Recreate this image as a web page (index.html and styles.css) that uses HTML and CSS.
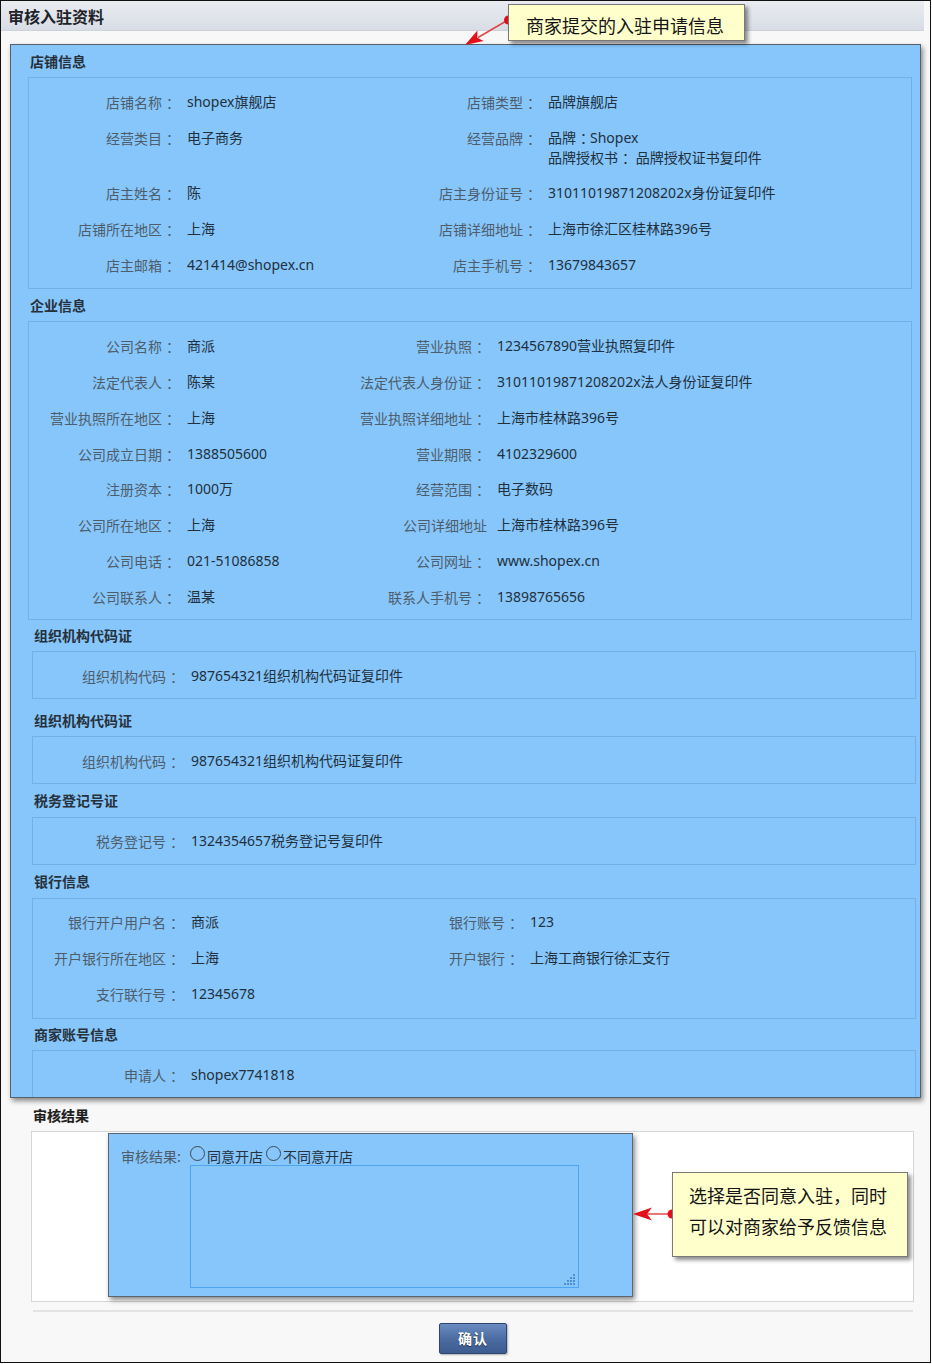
FILE: index.html
```html
<!DOCTYPE html>
<html lang="zh-CN">
<head>
<meta charset="utf-8">
<title>审核入驻资料</title>
<link rel="stylesheet" href="styles.css">
</head>
<body>
<div class="frame">
  <div class="topbar">审核入驻资料</div>
  <div class="content">
    <div class="hl-main">
      <section class="sec">
        <h2 class="sec-title">店铺信息</h2>
        <div class="sec-box kv kv-shop">
          <div class="lbl">店铺名称<span class="c">：</span></div><div class="val">shopex旗舰店</div>
          <div class="lbl">店铺类型<span class="c">：</span></div><div class="val">品牌旗舰店</div>
          <div class="lbl">经营类目<span class="c">：</span></div><div class="val">电子商务</div>
          <div class="lbl">经营品牌<span class="c">：</span></div><div class="val multi">品牌<span class="c">：</span>Shopex<br>品牌授权书<span class="c">：</span> 品牌授权证书复印件</div>
          <div class="lbl">店主姓名<span class="c">：</span></div><div class="val">陈</div>
          <div class="lbl">店主身份证号<span class="c">：</span></div><div class="val">31011019871208202x身份证复印件</div>
          <div class="lbl">店铺所在地区<span class="c">：</span></div><div class="val">上海</div>
          <div class="lbl">店铺详细地址<span class="c">：</span></div><div class="val">上海市徐汇区桂林路396号</div>
          <div class="lbl">店主邮箱<span class="c">：</span></div><div class="val">421414@shopex.cn</div>
          <div class="lbl">店主手机号<span class="c">：</span></div><div class="val">13679843657</div>
        </div>
      </section>

      <section class="sec">
        <h2 class="sec-title t-co">企业信息</h2>
        <div class="sec-box kv kv-co">
          <div class="lbl">公司名称<span class="c">：</span></div><div class="val">商派</div>
          <div class="lbl">营业执照<span class="c">：</span></div><div class="val">1234567890营业执照复印件</div>
          <div class="lbl">法定代表人<span class="c">：</span></div><div class="val">陈某</div>
          <div class="lbl">法定代表人身份证<span class="c">：</span></div><div class="val">31011019871208202x法人身份证复印件</div>
          <div class="lbl">营业执照所在地区<span class="c">：</span></div><div class="val">上海</div>
          <div class="lbl">营业执照详细地址<span class="c">：</span></div><div class="val">上海市桂林路396号</div>
          <div class="lbl">公司成立日期<span class="c">：</span></div><div class="val">1388505600</div>
          <div class="lbl">营业期限<span class="c">：</span></div><div class="val">4102329600</div>
          <div class="lbl">注册资本<span class="c">：</span></div><div class="val">1000万</div>
          <div class="lbl">经营范围<span class="c">：</span></div><div class="val">电子数码</div>
          <div class="lbl">公司所在地区<span class="c">：</span></div><div class="val">上海</div>
          <div class="lbl lbl-nocolon">公司详细地址</div><div class="val">上海市桂林路396号</div>
          <div class="lbl">公司电话<span class="c">：</span></div><div class="val">021-51086858</div>
          <div class="lbl">公司网址<span class="c">：</span></div><div class="val">www.shopex.cn</div>
          <div class="lbl">公司联系人<span class="c">：</span></div><div class="val">温某</div>
          <div class="lbl">联系人手机号<span class="c">：</span></div><div class="val">13898765656</div>
        </div>
      </section>

      <section class="sec shift">
        <h2 class="sec-title">组织机构代码证</h2>
        <div class="sec-box kv kv-one">
          <div class="lbl">组织机构代码<span class="c">：</span></div><div class="val">987654321组织机构代码证复印件</div>
        </div>
      </section>

      <section class="sec shift">
        <h2 class="sec-title t-gap">组织机构代码证</h2>
        <div class="sec-box kv kv-one">
          <div class="lbl">组织机构代码<span class="c">：</span></div><div class="val">987654321组织机构代码证复印件</div>
        </div>
      </section>

      <section class="sec shift">
        <h2 class="sec-title t-mid">税务登记号证</h2>
        <div class="sec-box kv kv-one kv-up">
          <div class="lbl">税务登记号<span class="c">：</span></div><div class="val">1324354657税务登记号复印件</div>
        </div>
      </section>

      <section class="sec shift">
        <h2 class="sec-title t-mid">银行信息</h2>
        <div class="sec-box kv kv-bank kv-up">
          <div class="lbl">银行开户用户名<span class="c">：</span></div><div class="val">商派</div>
          <div class="lbl">银行账号<span class="c">：</span></div><div class="val">123</div>
          <div class="lbl">开户银行所在地区<span class="c">：</span></div><div class="val">上海</div>
          <div class="lbl">开户银行<span class="c">：</span></div><div class="val">上海工商银行徐汇支行</div>
          <div class="lbl">支行联行号<span class="c">：</span></div><div class="val">12345678</div>
        </div>
      </section>

      <section class="sec shift">
        <h2 class="sec-title">商家账号信息</h2>
        <div class="sec-box kv kv-one last">
          <div class="lbl">申请人<span class="c">：</span></div><div class="val">shopex7741818</div>
        </div>
      </section>
    </div>

    <section class="result">
      <h2 class="sec-title result-title">审核结果</h2>
      <div class="result-box">
        <div class="hl-result">
          <div class="res-label">审核结果:</div>
          <div class="res-body">
            <div class="radios">
              <label class="radio"><input type="radio" name="res"><span>同意开店</span></label>
              <label class="radio"><input type="radio" name="res"><span>不同意开店</span></label>
            </div>
            <div class="ta-wrap">
              <textarea class="ta"></textarea>
              <svg class="grip" width="12" height="11" viewBox="0 0 12 11">
                <rect x="9" y="0" width="2" height="2"/>
                <rect x="6" y="3" width="2" height="2"/><rect x="9" y="3" width="2" height="2"/>
                <rect x="3" y="6" width="2" height="2"/><rect x="6" y="6" width="2" height="2"/><rect x="9" y="6" width="2" height="2"/>
                <rect x="0" y="9" width="2" height="2"/><rect x="3" y="9" width="2" height="2"/><rect x="6" y="9" width="2" height="2"/><rect x="9" y="9" width="2" height="2"/>
              </svg>
            </div>
          </div>
        </div>
      </div>
      <div class="divider"></div>
      <div class="actions"><button class="btn" type="button">确认</button></div>
    </section>
  </div>

  <svg class="arrows" width="932" height="1364" viewBox="0 0 932 1364">
    <line x1="508" y1="20" x2="478" y2="37.5" stroke="#e04848" stroke-width="1.5"/>
    <polygon points="465,45 477.4,30.6 477.3,37.8 483.6,41" fill="#e3101b"/>
    <circle cx="508.5" cy="20" r="4.5" fill="#e3101b"/>
    <line x1="647" y1="1214" x2="672" y2="1214" stroke="#e04848" stroke-width="1.5"/>
    <polygon points="633,1214 652,1207.5 647,1214 652,1220.5" fill="#e3101b"/>
    <circle cx="672" cy="1214" r="4.5" fill="#e3101b"/>
  </svg>

  <div class="callout callout-top">商家提交的入驻申请信息</div>
  <div class="callout callout-side">选择是否同意入驻，同时<br>可以对商家给予反馈信息</div>
</div>
</body>
</html>
```

FILE: styles.css
```css
* {
  box-sizing: border-box;
  margin: 0;
  padding: 0;
}

html, body {
  background: #ffffff;
}

body {
  margin: 0;
  font-family: "Noto Sans", "Noto Sans CJK SC", sans-serif;
  color: #222;
}

/* full-width colon, ink centred in a 14px cell */
.c {
  display: inline-block;
  padding-left: 4px;
  letter-spacing: -4px;
  line-height: 0;
  font-family: "Noto Sans CJK SC", sans-serif;
}

.frame {
  position: relative;
  width: 931px;
  height: 1363px;
  border: 1px solid #111;
  background: #f8f8f8;
  overflow: hidden;
}

.topbar {
  width: 923px;
  height: 30px;
  padding: 2px 0 0 7px;
  line-height: 27px;
  font-family: "Noto Sans CJK SC", sans-serif;
  font-size: 16px;
  font-weight: bold;
  color: #1e2329;
  background: linear-gradient(#e9ecf1, #d8dde5);
  border-bottom: 1px solid #cdd2da;
}

.content {
  padding-top: 13px;
}

/* big blue highlighted region */
.hl-main {
  margin: 0 9px 0 9px;
  padding: 1px 8px 0 17px;
  background: #86c6fa;
  border: 1px solid #56616c;
  box-shadow: 2px 3px 5px rgba(0, 0, 0, 0.45);
}

.sec-title {
  height: 31px;
  padding: 7px 0 0 2px;
  line-height: 16px;
  font-family: "Noto Sans CJK SC", sans-serif;
  font-size: 14px;
  font-weight: bold;
  color: #26313c;
}

.t-co {
  height: 32px;
  padding-top: 8px;
}

.t-gap {
  height: 37px;
  padding-top: 13px;
}

.t-mid {
  height: 33px;
  padding-top: 8px;
}

.sec.shift {
  margin-left: 4px;
  margin-right: -4px;
}

.sec-box {
  border: 1px solid #70b1e8;
  padding: 7px 0 3px 0;
}

.sec-box.last {
  border-bottom: none;
}

.kv {
  display: grid;
  align-items: start;
  font-size: 14px;
}

.kv-shop {
  grid-template-columns: 158px 200px 161px 1fr;
  grid-template-rows: 36px 55px 36px 36px 36px;
  padding-bottom: 4px;
}

.kv-co {
  grid-template-columns: 158px 150px 160px 1fr;
  grid-auto-rows: 35.85px;
}

.kv-bank {
  grid-template-columns: 158px 180px 159px 1fr;
  grid-auto-rows: 36px;
  padding-bottom: 4px;
}

.kv-one {
  grid-template-columns: 158px 1fr;
  grid-auto-rows: 36px;
}

.lbl,
.val {
  padding-top: 7px;
  line-height: 20px;
  white-space: nowrap;
}

.kv-up .lbl,
.kv-up .val {
  padding-top: 6px;
}

.lbl {
  text-align: right;
  font-family: "Noto Sans CJK SC", sans-serif;
  color: #4e5d6c;
}

.kv .lbl {
  padding-right: 11px;
}

.kv .lbl.lbl-nocolon {
  padding-right: 10px;
}

.val {
  color: #22303d;
}

/* result section */
.result-title {
  margin-left: 30px;
  height: 33px;
  padding-top: 9px;
  color: #1f1f1f;
  text-shadow: 0 0 1px rgba(0, 0, 0, 0.25);
}

.result-box {
  margin-left: 30px;
  width: 883px;
  background: #ffffff;
  border: 1px solid #d6d6d6;
  padding: 1px 0 4px 76px;
}

.hl-result {
  width: 525px;
  height: 164px;
  display: grid;
  grid-template-columns: 81px 1fr;
  align-content: start;
  background: #86c6fa;
  border: 1px solid #5b6671;
  box-shadow: 2px 3px 5px rgba(0, 0, 0, 0.45);
  font-family: "Noto Sans CJK SC", sans-serif;
  font-size: 14px;
}

.res-label {
  padding: 12px 0 0 12px;
  line-height: 20px;
  color: #4e5d6c;
  white-space: nowrap;
}

.radios {
  display: flex;
  padding-top: 12px;
  height: 31px;
  line-height: 20px;
  color: #26323e;
}

.radio {
  display: flex;
  align-items: center;
  height: 20px;
  margin-right: 3px;
}

.radio input {
  appearance: none;
  -webkit-appearance: none;
  width: 15px;
  height: 15px;
  margin: -4px 2px 0 0;
  border: 1px solid #3e4852;
  border-radius: 50%;
  background: transparent;
}

.ta-wrap {
  position: relative;
  width: 389px;
  height: 123px;
}

.ta {
  display: block;
  width: 389px;
  height: 123px;
  resize: none;
  background: transparent;
  border: 1px solid #4fa4f0;
  outline: none;
}

.grip {
  position: absolute;
  right: 3px;
  bottom: 3px;
  fill: #4d8fcf;
}

.divider {
  margin: 8px 0 0 32px;
  width: 880px;
  height: 2px;
  background: #e3e3e3;
}

.actions {
  margin-left: 32px;
  width: 880px;
  padding-top: 11px;
  display: flex;
  justify-content: center;
}

.btn {
  width: 68px;
  height: 31px;
  font-family: "Noto Sans CJK SC", sans-serif;
  font-size: 14px;
  font-weight: bold;
  color: #ffffff;
  letter-spacing: 1px;
  text-shadow: 0 1px 1px rgba(0, 0, 0, 0.55);
  background: linear-gradient(#6a8cc0, #4a6aa0 55%, #3d5b8f);
  border: 1px solid #2d4670;
  border-radius: 2px;
  box-shadow: 1px 1px 2px rgba(0, 0, 0, 0.3);
}

/* annotation overlays */
.arrows {
  position: absolute;
  left: -1px;
  top: -1px;
  z-index: 5;
  pointer-events: none;
}

.callout {
  position: absolute;
  z-index: 6;
  background: #ffffcc;
  border: 1px solid #7a7a7a;
  box-shadow: 3px 3px 4px rgba(0, 0, 0, 0.45);
  font-family: "Noto Sans CJK SC", sans-serif;
  font-size: 18px;
  color: #151515;
  white-space: nowrap;
}

.callout-top {
  left: 507px;
  top: 3px;
  width: 237px;
  height: 37px;
  padding: 4px 0 0 17px;
  line-height: 32px;
}

.callout-side {
  left: 671px;
  top: 1171px;
  width: 236px;
  height: 85px;
  padding: 7px 0 0 16px;
  line-height: 31px;
}
```
